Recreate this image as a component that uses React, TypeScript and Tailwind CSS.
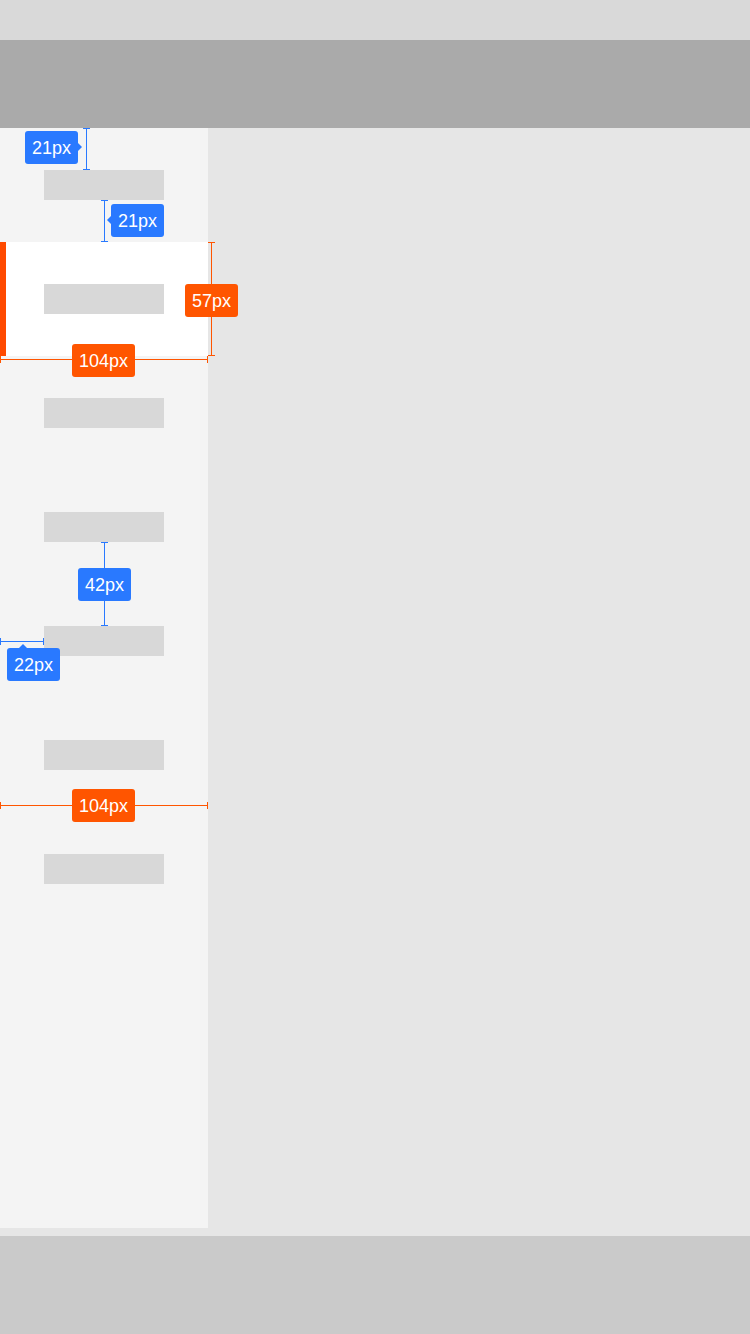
import clsx from "clsx";

type Tone = "blue" | "orange";

const fill = { blue: "bg-[#2979ff]", orange: "bg-[#ff5500]" };

// measurement badge
function Tag({
  text,
  tone,
  className,
  tip,
}: {
  text: string;
  tone: Tone;
  className: string;
  tip?: "left" | "right" | "top";
}) {
  return (
    <div
      className={clsx(
        "absolute flex h-[33px] items-center justify-center rounded-[3px] text-[18px] leading-none text-white",
        fill[tone],
        className
      )}
    >
      {text}
      {tip === "right" && (
        <span className="absolute top-[12px] -right-[4px] border-y-[4px] border-l-[4px] border-y-transparent border-l-[#2979ff]" />
      )}
      {tip === "left" && (
        <span className="absolute top-[12px] -left-[4px] border-y-[4px] border-r-[4px] border-y-transparent border-r-[#2979ff]" />
      )}
      {tip === "top" && (
        <span className="absolute -top-[4px] left-[12px] border-x-[4px] border-b-[4px] border-x-transparent border-b-[#2979ff]" />
      )}
    </div>
  );
}

// vertical dimension line with end ticks
function VLine({ tone, className }: { tone: Tone; className: string }) {
  return (
    <div className={clsx("absolute flex w-[7px] flex-col items-center", className)}>
      <div className={clsx("h-px w-[7px]", fill[tone])} />
      <div className={clsx("w-px flex-1", fill[tone])} />
      <div className={clsx("h-px w-[7px]", fill[tone])} />
    </div>
  );
}

// horizontal dimension line with end ticks
function HLine({ tone, className }: { tone: Tone; className: string }) {
  return (
    <div className={clsx("absolute flex h-[7px] items-center", className)}>
      <div className={clsx("h-[7px] w-px", fill[tone])} />
      <div className={clsx("h-px flex-1", fill[tone])} />
      <div className={clsx("h-[7px] w-px", fill[tone])} />
    </div>
  );
}

export default function App() {
  const items = [0, 1, 2, 3, 4, 5, 6];

  return (
    <div className="flex h-[1334px] w-[750px] flex-col overflow-hidden bg-[#e6e6e6] font-['Liberation_Sans',Arial,sans-serif]">
      {/* status bar */}
      <div className="h-[40px] bg-[#d9d9d9]" />
      {/* nav bar */}
      <div className="h-[88px] bg-[#aaaaaa]" />

      <div className="flex flex-1">
        {/* sidebar */}
        <div className="relative mb-[8px] flex w-[208px] flex-col bg-[#f4f4f4]">
          {items.map((i) =>
            i === 1 ? (
              <div
                key={i}
                className="flex h-[114px] items-center border-l-[6px] border-[#ff4a00] bg-white pl-[38px]"
              >
                <div className="h-[30px] w-[120px] bg-[#d8d8d8]" />
              </div>
            ) : (
              <div key={i} className="flex h-[114px] items-center pl-[44px]">
                <div className="h-[30px] w-[120px] bg-[#d8d8d8]" />
              </div>
            )
          )}

          {/* spec annotations */}
          <VLine tone="blue" className="top-0 left-[83px] h-[42px]" />
          <Tag text="21px" tone="blue" tip="right" className="top-[3px] left-[25px] w-[53px]" />

          <VLine tone="blue" className="top-[72px] left-[101px] h-[42px]" />
          <Tag text="21px" tone="blue" tip="left" className="top-[76px] left-[111px] w-[53px]" />

          <VLine tone="orange" className="top-[114px] left-[208px] h-[114px]" />
          <Tag text="57px" tone="orange" className="top-[156px] left-[185px] w-[53px]" />

          <HLine tone="orange" className="top-[228px] left-0 w-[208px]" />
          <Tag text="104px" tone="orange" className="top-[216px] left-[72px] w-[63px]" />

          <VLine tone="blue" className="top-[414px] left-[101px] h-[84px]" />
          <Tag text="42px" tone="blue" className="top-[440px] left-[78px] w-[53px]" />

          <HLine tone="blue" className="top-[510px] left-0 w-[44px]" />
          <Tag text="22px" tone="blue" tip="top" className="top-[520px] left-[7px] w-[53px]" />

          <HLine tone="orange" className="top-[674px] left-0 w-[208px]" />
          <Tag text="104px" tone="orange" className="top-[661px] left-[72px] w-[63px]" />
        </div>
        <div className="flex-1" />
      </div>

      {/* tab bar */}
      <div className="h-[98px] bg-[#cacaca]" />
    </div>
  );
}
